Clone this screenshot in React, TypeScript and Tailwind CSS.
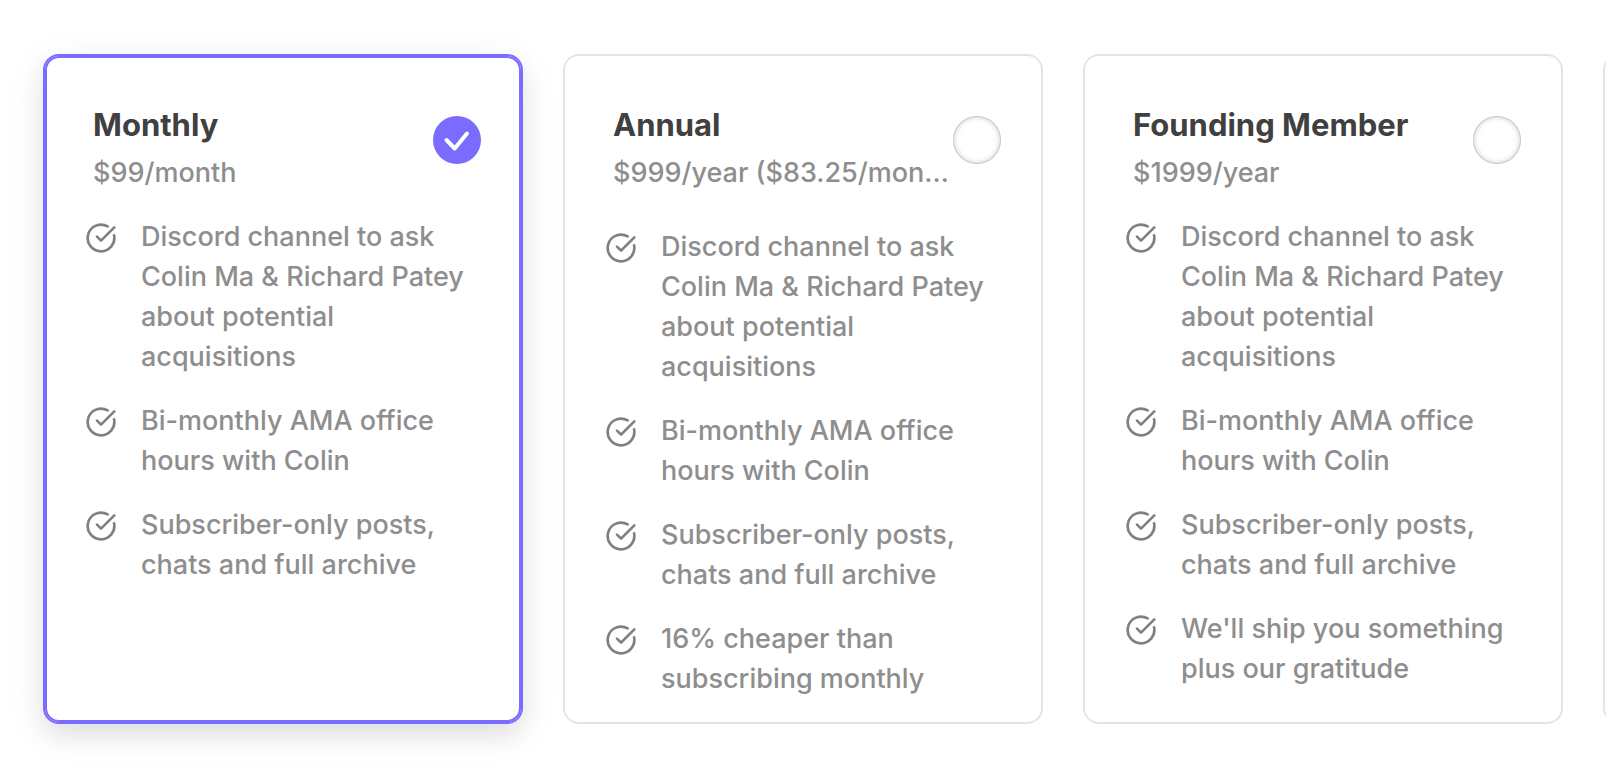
import { useState } from "react";
import { CircleCheckBig } from "lucide-react";

type Plan = {
  id: string;
  name: string;
  price: string;
  spaced?: boolean;
  benefits: string[];
};

const shared = [
  "Discord channel to ask Colin Ma & Richard Patey about potential acquisitions",
  "Bi-monthly AMA office hours with Colin",
  "Subscriber-only posts, chats and full archive",
];

const plans: Plan[] = [
  { id: "monthly", name: "Monthly", price: "$99/month", benefits: shared },
  {
    id: "annual",
    name: "Annual",
    price: "$999/year ($83.25/month)",
    spaced: true,
    benefits: [...shared, "16% cheaper than subscribing monthly"],
  },
  {
    id: "founding",
    name: "Founding Member",
    price: "$1999/year",
    benefits: [...shared, "We'll ship you something plus our gratitude"],
  },
];

function PlanCard({
  plan,
  selected,
  onSelect,
}: {
  plan: Plan;
  selected: boolean;
  onSelect: () => void;
}) {
  return (
    <article
      className={`w-[480px] shrink-0 rounded-2xl border-2 bg-white pb-[23px] ${
        selected
          ? "border-[#7b6cff] shadow-[inset_0_0_0_2px_#7b6cff,0_12px_24px_rgba(0,0,0,0.09),0_8px_48px_rgba(0,0,0,0.05)]"
          : "border-[#e4e4e4]"
      }`}
    >
      <label
        htmlFor={plan.id}
        className={`flex cursor-pointer items-start pt-[49px] pr-10 pl-12 ${plan.spaced ? "mb-[34px]" : "mb-6"}`}
      >
        <span className="flex min-w-0 flex-1 flex-col gap-2">
          <span className="text-[31px] leading-10 font-bold whitespace-nowrap text-[#404040]">{plan.name}</span>
          <span className="truncate text-[27px] leading-10 font-medium">{plan.price}</span>
        </span>
        <span className="mt-[11px] grid size-12 shrink-0 place-items-center">
          <input
            type="radio"
            id={plan.id}
            name="plan"
            checked={selected}
            onChange={onSelect}
            className="col-start-1 row-start-1 size-12 cursor-pointer appearance-none rounded-full bg-white shadow-[inset_0_0_0_1px_rgba(0,0,0,0.12),inset_0_0_6px_rgba(0,0,0,0.24)] checked:bg-[#7b6cff] checked:shadow-none"
          />
          {selected && (
            <svg viewBox="0 0 48 48" className="pointer-events-none col-start-1 row-start-1 size-12" aria-hidden="true">
              <path
                d="M13.5 24 L21.7 32.5 L34 17.5"
                fill="none"
                stroke="white"
                strokeWidth="4"
                strokeLinecap="round"
                strokeLinejoin="round"
              />
            </svg>
          )}
        </span>
      </label>
      <ul className="flex flex-col gap-6 pr-10 pl-10">
        {plan.benefits.map((benefit) => (
          <li key={benefit} className="flex gap-6">
            <CircleCheckBig className="mt-[5px] size-8 shrink-0 text-[#808080]" strokeWidth={2} />
            <span className="min-w-0 flex-1 text-[27px] leading-10 font-medium">{benefit}</span>
          </li>
        ))}
      </ul>
    </article>
  );
}

export default function App() {
  const [selected, setSelected] = useState("monthly");
  return (
    <main className="min-h-screen bg-white font-[Inter,sans-serif] text-[#8e8e8e]">
      <div className="flex gap-10 overflow-hidden pt-[54px] pb-[42px] pl-[43px]">
        {plans.map((plan) => (
          <PlanCard
            key={plan.id}
            plan={plan}
            selected={selected === plan.id}
            onSelect={() => setSelected(plan.id)}
          />
        ))}
        <div className="w-[480px] shrink-0 rounded-2xl border-2 border-[#e4e4e4]" />
      </div>
    </main>
  );
}
